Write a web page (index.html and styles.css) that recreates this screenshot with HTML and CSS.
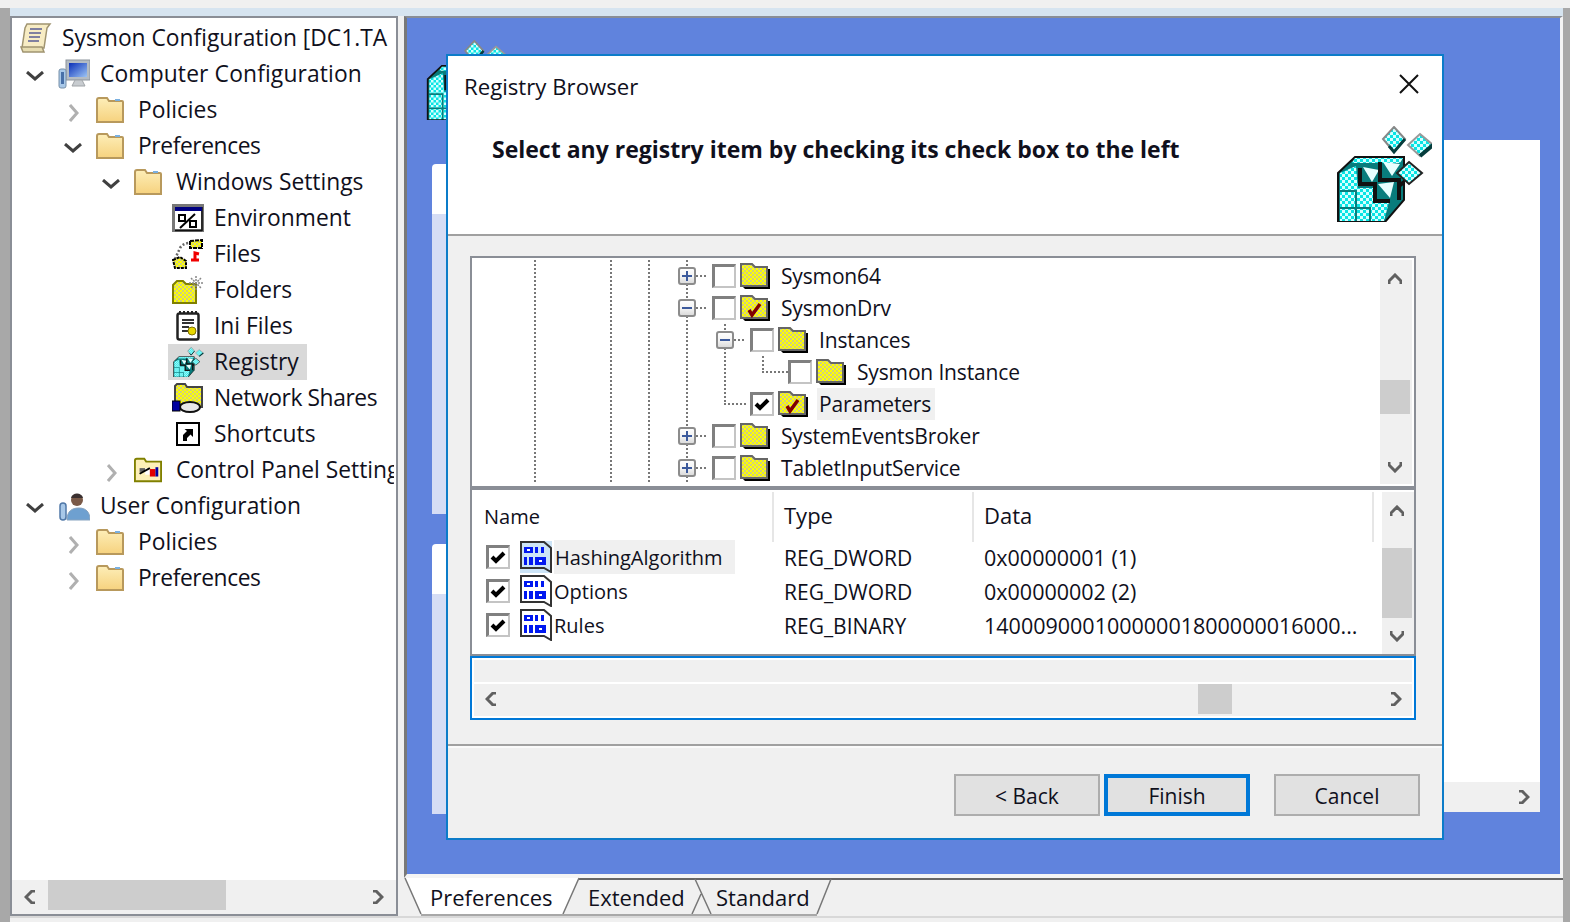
FILE: index.html
```html
<!DOCTYPE html>
<html lang="en">
<head>
  <meta charset="UTF-8">
  <title>Registry Browser</title>
  <link rel="stylesheet" href="styles.css">
</head>
<body>
  <svg class="defs" width="0" height="0">
    <defs>
      <pattern id="dy" width="4" height="4" patternUnits="userSpaceOnUse">
        <rect width="4" height="4" fill="#ffff00"/>
        <rect width="2" height="2" fill="#cfcf80"/>
        <rect x="2" y="2" width="2" height="2" fill="#cfcf80"/>
      </pattern>
      <pattern id="dc" width="6" height="6" patternUnits="userSpaceOnUse">
        <rect width="6" height="6" fill="#08e4e4"/>
        <rect width="3" height="3" fill="#d4ffff"/>
        <rect x="3" y="3" width="3" height="3" fill="#d4ffff"/>
      </pattern>
      <linearGradient id="fold" x1="0" y1="0" x2="0" y2="1">
        <stop offset="0" stop-color="#fdeeb8"/>
        <stop offset="1" stop-color="#f6d27e"/>
      </linearGradient>
      <linearGradient id="screen" x1="0" y1="0" x2="1" y2="1">
        <stop offset="0" stop-color="#0a2fb8"/>
        <stop offset="1" stop-color="#9cc4f4"/>
      </linearGradient>
      <linearGradient id="btn" x1="0" y1="0" x2="0" y2="1">
        <stop offset="0" stop-color="#ffffff"/>
        <stop offset="0.55" stop-color="#f2f2f2"/>
        <stop offset="1" stop-color="#d8d8d8"/>
      </linearGradient>

      <symbol id="i-scroll" viewBox="0 0 32 32">
        <path d="M7 2H30L27 6 24 26H2L5 6Z" fill="#f7ecc4" stroke="#a09470" stroke-width="1.5"/>
        <path d="M1 25H22L24 30H3Z" fill="#e6dcb0" stroke="#a09470" stroke-width="1.5"/>
        <path d="M10 7H22M9 11H21M9 15H20M8 19H19" stroke="#8080a0" stroke-width="2"/>
      </symbol>
      <symbol id="i-pc" viewBox="0 0 32 30">
        <rect x="8" y="1" width="24" height="20" fill="#b4bcc4" stroke="#8c949c"/>
        <rect x="11" y="4" width="18" height="14" fill="url(#screen)"/>
        <path d="M17 21H24L27 27H14Z" fill="#c8ccd0" stroke="#a0a4a8"/>
        <rect x="1" y="10" width="7" height="19" rx="2" fill="#a8c8e8" stroke="#7890a8"/>
        <rect x="3" y="13" width="3" height="12" fill="#4870a8"/>
      </symbol>
      <symbol id="i-user" viewBox="0 0 32 30">
        <path d="M9 29C9 20 14 17 21 17S32 21 32 29Z" fill="#6ea0d0" stroke="#88a4c0"/>
        <circle cx="19" cy="9" r="6" fill="#7a5a48"/>
        <path d="M13 7C14 1 24 1 25 7Z" fill="#3a3030"/>
        <rect x="2" y="12" width="6" height="17" rx="3" fill="#a8c8e8" stroke="#5078a8" stroke-width="1.5"/>
      </symbol>
      <symbol id="i-folder" viewBox="0 0 28 26">
        <path d="M1 25V3Q1 1 3 1H11L13 4H26Q27 4 27 5V25Z" fill="url(#fold)" stroke="#b8995c" stroke-width="2"/>
        <rect x="19" y="2" width="5" height="2" fill="#7ab0e0"/>
      </symbol>
      <symbol id="i-env" viewBox="0 0 32 28">
        <rect x="1.5" y="1.5" width="29" height="25" fill="#fff" stroke="#777" stroke-width="3"/>
        <path d="M30 27V3" stroke="#111" stroke-width="1.5"/>
        <path d="M30 26.5H3" stroke="#111" stroke-width="1.5"/>
        <rect x="3" y="3" width="27" height="4" fill="#000080"/>
        <path d="M8 24L23 10" stroke="#000" stroke-width="2"/>
        <rect x="7" y="11" width="6" height="6" fill="none" stroke="#000" stroke-width="2"/>
        <rect x="18" y="17" width="6" height="6" fill="none" stroke="#000" stroke-width="2"/>
      </symbol>
      <symbol id="i-files" viewBox="0 0 32 30">
        <path d="M18 2L30 1V9H18Z" fill="url(#dy)" stroke="#000" stroke-width="2" stroke-dasharray="4 1"/>
        <path d="M3 20L8 9Q11 4 18 4" fill="none" stroke="#666" stroke-width="2.5" stroke-dasharray="2 2"/>
        <path d="M1 21L8 18 14 22V29H3Z" fill="url(#dy)" stroke="#000" stroke-width="2" stroke-dasharray="3 1"/>
        <path d="M19 21H27M23 22V14L27 15" stroke="#f00000" stroke-width="3" fill="none"/>
      </symbol>
      <symbol id="i-folders" viewBox="0 0 32 28">
        <path d="M1 27V9L5 5H11L14 8H24V27Z" fill="url(#dy)" stroke="#808000" stroke-width="2"/>
        <path d="M24 0V14M17 7H31M19 2L29 12M29 2L19 12" stroke="#888" stroke-width="1.5" stroke-dasharray="2 1"/>
      </symbol>
      <symbol id="i-ini" viewBox="0 0 32 30">
        <rect x="5.5" y="2.5" width="21" height="26" rx="2" fill="#fff" stroke="#222" stroke-width="2.5"/>
        <path d="M7 1H25" stroke="#222" stroke-width="2.5" stroke-dasharray="2 2"/>
        <path d="M10 9H22M10 12H22M10 16H17M10 20H16" stroke="#333" stroke-width="2"/>
        <circle cx="20" cy="20" r="4" fill="#e8d800" stroke="#807000"/>
      </symbol>
      <symbol id="i-reg" viewBox="0 0 96 96">
        <polygon points="58,1 69,13 58,26 47,13" fill="url(#dc)" stroke="#888" stroke-width="2"/>
        <path d="M69 13L58 26 53 20" fill="none" stroke="#063c3c" stroke-width="3"/>
        <polygon points="84,8 97,19 84,30 72,19" fill="url(#dc)" stroke="#999" stroke-width="2"/>
        <path d="M97 19L84 30" fill="none" stroke="#063c3c" stroke-width="4"/>
        <polygon points="2,47 19,31 68,31 68,74 49,96 2,96" fill="#087c7c" stroke="#111" stroke-width="2"/>
        <polygon points="19,32 67,32 64,37 16,37" fill="url(#dc)"/>
        <polygon points="4,47 20,40 22,64 4,64" fill="url(#dc)"/>
        <rect x="4" y="66" width="15" height="15" fill="url(#dc)"/>
        <rect x="21" y="62" width="17" height="19" fill="url(#dc)"/>
        <rect x="4" y="83" width="15" height="12" fill="url(#dc)"/>
        <rect x="21" y="83" width="12" height="12" fill="url(#dc)"/>
        <polygon points="35,76 53,76 48,95 35,95" fill="url(#dc)"/>
        <polygon points="27,41 43,44 36,56" fill="#e8ffff"/>
        <polygon points="47,36 64,38 56,50" fill="#e8ffff"/>
        <polygon points="42,58 58,56 54,72" fill="#e8ffff"/>
        <path d="M24 42V58H41M39 58V75H54M44 36V54H63V74M63 60L68 56" fill="none" stroke="#111" stroke-width="4"/>
        <polygon points="73,36 86,47 73,58 61,47" fill="url(#dc)" stroke="#222" stroke-width="2"/>
      </symbol>
      <symbol id="i-net" viewBox="0 0 32 30">
        <path d="M3 20V3L5 1H13L15 4H30V24H3Z" fill="url(#dy)" stroke="#444" stroke-width="2"/>
        <ellipse cx="18" cy="24" rx="10" ry="5" fill="#e8e8e8" stroke="#111" stroke-width="2"/>
        <rect x="0" y="18" width="8" height="10" fill="#0000a0" stroke="#000"/>
      </symbol>
      <symbol id="i-short" viewBox="0 0 24 24">
        <rect x="1" y="1" width="22" height="22" fill="#fff" stroke="#000" stroke-width="2"/>
        <path d="M7 19V13L11 9 8.5 7H17V15L14.5 12.5 11 16V19Z" fill="#000"/>
      </symbol>
      <symbol id="i-cpl" viewBox="0 0 30 26">
        <path d="M1 25V3Q1 1 3 1H11L13 4H29V25Z" fill="#fdf0b8" stroke="#808000" stroke-width="2"/>
        <rect x="6" y="11" width="6" height="4" fill="#606060"/>
        <rect x="12" y="11" width="5" height="7" fill="#fff"/>
        <path d="M6 17L17 11" stroke="#000" stroke-width="2"/>
        <rect x="17" y="12" width="6" height="8" fill="#e00000"/>
        <rect x="23" y="10" width="3" height="10" fill="#0000a0"/>
      </symbol>
      <symbol id="i-yfold" viewBox="0 0 30 28">
        <path d="M5 27H30V7H2V24Z" fill="#000"/>
        <path d="M1 24V2H12L15 5H27V24Z" fill="url(#dy)" stroke="#666" stroke-width="2"/>
      </symbol>
      <symbol id="i-yfoldc" viewBox="0 0 30 28">
        <path d="M5 27H30V7H2V24Z" fill="#000"/>
        <path d="M1 24V2H12L15 5H27V24Z" fill="url(#dy)" stroke="#666" stroke-width="2"/>
        <path d="M9 16L12 21 20 10" fill="none" stroke="#800000" stroke-width="3.5"/>
      </symbol>
      <symbol id="i-bin" viewBox="0 0 32 32">
        <path d="M1 1H24L31 7V31L24 27H1Z" fill="none" stroke="#333" stroke-width="2"/>
        <path d="M4 6H13V12H4ZM15 6H18V12H15ZM21 6H24V12H21ZM4 16H7V24H4ZM9 16H13V24H9ZM15 16H26V24H15Z" fill="#0018f0"/>
        <rect x="7" y="8" width="3" height="2" fill="#fff"/>
        <rect x="19" y="19" width="3" height="2" fill="#fff"/>
      </symbol>
      <symbol id="i-plus" viewBox="0 0 18 18">
        <rect x="1" y="1" width="16" height="16" rx="2" fill="url(#btn)" stroke="#8c8c8c" stroke-width="2"/>
        <path d="M4 9H14M9 4V14" stroke="#3c5a9c" stroke-width="2"/>
      </symbol>
      <symbol id="i-minus" viewBox="0 0 18 18">
        <rect x="1" y="1" width="16" height="16" rx="2" fill="url(#btn)" stroke="#8c8c8c" stroke-width="2"/>
        <path d="M4 9H14" stroke="#3c5a9c" stroke-width="2"/>
      </symbol>
      <symbol id="i-tick" viewBox="0 0 24 24">
        <path d="M6 12L10 16 18 8" fill="none" stroke="#000" stroke-width="4"/>
      </symbol>
      <symbol id="ch-up" viewBox="0 0 14 12"><path d="M1 11V8L7 2 13 8V11" fill="none" stroke="#606060" stroke-width="3"/></symbol>
      <symbol id="ch-down" viewBox="0 0 14 12"><path d="M1 1V4L7 10 13 4V1" fill="none" stroke="#606060" stroke-width="3"/></symbol>
      <symbol id="ch-left" viewBox="0 0 12 14"><path d="M11 1H8L2 7 8 13H11" fill="none" stroke="#606060" stroke-width="3"/></symbol>
      <symbol id="ch-right" viewBox="0 0 12 14"><path d="M1 1H4L10 7 4 13H1" fill="none" stroke="#606060" stroke-width="3"/></symbol>
      <symbol id="tw-open" viewBox="0 0 18 10"><path d="M1 1L9 8 17 1" fill="none" stroke="#404040" stroke-width="3"/></symbol>
      <symbol id="tw-closed" viewBox="0 0 10 18"><path d="M1 1L8 9 1 17" fill="none" stroke="#b0b0b0" stroke-width="3"/></symbol>
    </defs>
  </svg>

  <div class="frame">
    <div class="strip"></div>
    <div class="panes">

      <div class="left">
        <div class="nav">
          <div class="node lv0"><svg class="ic ic-scroll"><use href="#i-scroll"/></svg><span>Sysmon Configuration [DC1.TA</span></div>
          <div class="node lv1"><i class="tw"><svg class="tw-o"><use href="#tw-open"/></svg></i><svg class="ic ic-pc"><use href="#i-pc"/></svg><span class="wid">Computer Configuration</span></div>
          <div class="node lv2"><i class="tw"><svg class="tw-c"><use href="#tw-closed"/></svg></i><svg class="ic ic-fold"><use href="#i-folder"/></svg><span>Policies</span></div>
          <div class="node lv2"><i class="tw"><svg class="tw-o"><use href="#tw-open"/></svg></i><svg class="ic ic-fold"><use href="#i-folder"/></svg><span class="nar">Preferences</span></div>
          <div class="node lv3"><i class="tw"><svg class="tw-o"><use href="#tw-open"/></svg></i><svg class="ic ic-fold"><use href="#i-folder"/></svg><span>Windows Settings</span></div>
          <div class="node lv4"><i class="tw"></i><svg class="ic ic-item"><use href="#i-env"/></svg><span>Environment</span></div>
          <div class="node lv4"><i class="tw"></i><svg class="ic ic-item"><use href="#i-files"/></svg><span>Files</span></div>
          <div class="node lv4"><i class="tw"></i><svg class="ic ic-item"><use href="#i-folders"/></svg><span>Folders</span></div>
          <div class="node lv4"><i class="tw"></i><svg class="ic ic-item"><use href="#i-ini"/></svg><span>Ini Files</span></div>
          <div class="node lv4"><i class="tw"></i><div class="sel"><svg class="ic ic-item"><use href="#i-reg"/></svg><span>Registry</span></div></div>
          <div class="node lv4"><i class="tw"></i><svg class="ic ic-item"><use href="#i-net"/></svg><span class="nar">Network Shares</span></div>
          <div class="node lv4"><i class="tw"></i><svg class="ic ic-short"><use href="#i-short"/></svg><span>Shortcuts</span></div>
          <div class="node lv3"><i class="tw"><svg class="tw-c"><use href="#tw-closed"/></svg></i><svg class="ic ic-fold"><use href="#i-cpl"/></svg><span>Control Panel Settings</span></div>
          <div class="node lv1"><i class="tw"><svg class="tw-o"><use href="#tw-open"/></svg></i><svg class="ic ic-pc"><use href="#i-user"/></svg><span>User Configuration</span></div>
          <div class="node lv2"><i class="tw"><svg class="tw-c"><use href="#tw-closed"/></svg></i><svg class="ic ic-fold"><use href="#i-folder"/></svg><span>Policies</span></div>
          <div class="node lv2"><i class="tw"><svg class="tw-c"><use href="#tw-closed"/></svg></i><svg class="ic ic-fold"><use href="#i-folder"/></svg><span class="nar">Preferences</span></div>
        </div>
        <div class="hbar">
          <svg class="chev-h"><use href="#ch-left"/></svg>
          <div class="hthumb"></div>
          <svg class="chev-h end"><use href="#ch-right"/></svg>
        </div>
      </div>

      <div class="right">
        <div class="mdi">
          <svg class="bg-reg"><use href="#i-reg"/></svg>
          <div class="sheet sheet-a"></div>
          <div class="sheet sheet-b"></div>
          <div class="sheet-r">
            <div class="sheet-r-bar"><svg class="chev-h"><use href="#ch-right"/></svg></div>
          </div>

          <div class="dialog">
            <div class="head">
              <div class="head-text">
                <div class="dlg-title">Registry Browser</div>
                <div class="dlg-sub">Select any registry item by checking its check box to the left</div>
              </div>
              <svg class="head-ico"><use href="#i-reg"/></svg>
              <svg class="close" viewBox="0 0 20 20"><path d="M1 1L19 19M19 1L1 19" stroke="#111" stroke-width="2"/></svg>
            </div>

            <div class="body">
              <div class="keys">
                <div class="guide g1"></div>
                <div class="guide g2"></div>
                <div class="guide g3"></div>
                <div class="guide g4"></div>
                <div class="guide g5"></div>
                <div class="guide g6"></div>
                <div class="guide-h h1"></div>
                <div class="guide-h h2"></div>
                <div class="key-rows">
                  <div class="key k0"><div class="exp"><svg><use href="#i-plus"/></svg></div><div class="cb"></div><svg class="yf"><use href="#i-yfold"/></svg><span>Sysmon64</span></div>
                  <div class="key k0"><div class="exp"><svg><use href="#i-minus"/></svg></div><div class="cb"></div><svg class="yf"><use href="#i-yfoldc"/></svg><span>SysmonDrv</span></div>
                  <div class="key k1"><div class="exp"><svg><use href="#i-minus"/></svg></div><div class="cb"></div><svg class="yf"><use href="#i-yfold"/></svg><span>Instances</span></div>
                  <div class="key k2"><div class="exp none"></div><div class="cb"></div><svg class="yf"><use href="#i-yfold"/></svg><span>Sysmon Instance</span></div>
                  <div class="key k1"><div class="exp none"></div><div class="cb"><svg><use href="#i-tick"/></svg></div><svg class="yf"><use href="#i-yfoldc"/></svg><span class="hl">Parameters</span></div>
                  <div class="key k0"><div class="exp"><svg><use href="#i-plus"/></svg></div><div class="cb"></div><svg class="yf"><use href="#i-yfold"/></svg><span>SystemEventsBroker</span></div>
                  <div class="key k0"><div class="exp"><svg><use href="#i-plus"/></svg></div><div class="cb"></div><svg class="yf"><use href="#i-yfold"/></svg><span>TabletInputService</span></div>
                </div>
                <div class="vbar">
                  <svg class="chev-v"><use href="#ch-up"/></svg>
                  <div class="vthumb thumb-keys"></div>
                  <svg class="chev-v"><use href="#ch-down"/></svg>
                </div>
              </div>

              <div class="values">
                <div class="val-table">
                  <div class="val-head">
                    <div class="col-name">Name</div>
                    <div>Type</div>
                    <div>Data</div>
                  </div>
                  <div class="val-row">
                    <div class="val-name"><div class="cb"><svg><use href="#i-tick"/></svg></div><svg class="bin on"><use href="#i-bin"/></svg><span class="hl">HashingAlgorithm</span></div>
                    <div class="val-type">REG_DWORD</div>
                    <div class="val-data">0x00000001 (1)</div>
                  </div>
                  <div class="val-row">
                    <div class="val-name"><div class="cb"><svg><use href="#i-tick"/></svg></div><svg class="bin"><use href="#i-bin"/></svg><span>Options</span></div>
                    <div class="val-type">REG_DWORD</div>
                    <div class="val-data">0x00000002 (2)</div>
                  </div>
                  <div class="val-row">
                    <div class="val-name"><div class="cb"><svg><use href="#i-tick"/></svg></div><svg class="bin"><use href="#i-bin"/></svg><span>Rules</span></div>
                    <div class="val-type">REG_BINARY</div>
                    <div class="val-data">14000900010000001800000016000...</div>
                  </div>
                </div>
                <div class="vbar">
                  <svg class="chev-v"><use href="#ch-up"/></svg>
                  <div class="vthumb thumb-vals"></div>
                  <svg class="chev-v"><use href="#ch-down"/></svg>
                </div>
              </div>

              <div class="detail">
                <div class="detail-top"></div>
                <div class="detail-bar">
                  <svg class="chev-h"><use href="#ch-left"/></svg>
                  <div class="detail-thumb"></div>
                  <svg class="chev-h end"><use href="#ch-right"/></svg>
                </div>
              </div>

              <div class="rule"></div>
            </div>

            <div class="foot">
              <button class="btn back" type="button">&lt; Back</button>
              <button class="btn primary" type="button">Finish</button>
              <button class="btn cancel" type="button">Cancel</button>
            </div>
          </div>
        </div>

        <div class="tabs">
          <svg class="tab-lines" viewBox="0 0 1159 38">
            <path d="M175 1H1159" stroke="#666" stroke-width="2"/>
            <path d="M1 0H175L159 36H17Z" fill="#fff"/>
            <path d="M1 0L17 36M175 0L159 36" stroke="#777" stroke-width="1.5" fill="none"/>
            <path d="M291 1L307 36M427 1L413 36M288 36L297 16" stroke="#777" stroke-width="1.5" fill="none"/>
            <path d="M17 37H413" stroke="#a8a8a8" stroke-width="2"/>
          </svg>
          <div class="tab t1">Preferences</div>
          <div class="tab t2">Extended</div>
          <div class="tab">Standard</div>
        </div>
      </div>
    </div>
    <div class="status"></div>
  </div>
</body>
</html>
```

FILE: styles.css
```css
* { box-sizing: border-box; }

html, body {
  margin: 0;
  height: 100%;
  overflow: hidden;
}
body {
  background: #f0f0f0;
  font-family: "Open Sans", "Noto Sans", sans-serif;
  font-size: 22px;
  color: #10101c;
}
.defs { position: absolute; }
svg { display: block; overflow: visible; }

/* outer window */
.frame {
  width: 1570px;
  height: 914px;
  margin-top: 8px;
  border-left: 10px solid #a8a8a8;
  border-right: 7px solid #a8a8a8;
}
.strip { height: 8px; background: #d6e4f0; }
.panes { display: flex; gap: 6px; height: 900px; }
.status { height: 6px; border-top: 2px solid #d8d8d8; }

/* left tree */
.left {
  width: 388px;
  display: flex;
  flex-direction: column;
  border: 2px solid #8a8e96;
  background: #fff;
}
.nav { flex: 1; padding-top: 2px; overflow: hidden; margin-right: 2px; font-size: 22.8px; }
.node { display: flex; align-items: center; height: 36px; white-space: nowrap; }
.node span { height: 36px; line-height: 36px; }
.nar { letter-spacing: -0.4px; }
.wid { letter-spacing: 0.15px; }
.lv0 { padding-left: 8px; }
.lv1 { padding-left: 8px; }
.lv2 { padding-left: 46px; }
.lv3 { padding-left: 84px; }
.lv4 { padding-left: 122px; }
.tw { width: 38px; flex: none; display: flex; align-items: center; justify-content: center; padding-right: 8px; }
.tw-o { width: 18px; height: 10px; margin-top: 4px; }
.tw-c { width: 10px; height: 18px; margin: 6px 0 0 2px; }
.ic { flex: none; }
.ic-scroll { width: 32px; height: 32px; margin-right: 10px; }
.ic-pc { width: 32px; height: 30px; margin-right: 10px; }
.ic-fold { width: 28px; height: 26px; margin-right: 14px; }
.ic-item { width: 32px; height: 30px; margin-right: 10px; }
.ic-short { width: 24px; height: 24px; margin: 0 14px 0 4px; }
.sel {
  display: flex;
  align-items: center;
  height: 36px;
  margin-left: -4px;
  padding: 0 8px 0 4px;
  background: #d9d9d9;
}
.hbar {
  position: relative;
  display: flex;
  align-items: center;
  height: 34px;
  background: #f0f0f0;
  padding: 0 12px;
}
.hthumb {
  position: absolute;
  left: 36px;
  top: 0;
  width: 178px;
  height: 30px;
  background: #cdcdcd;
}
.chev-h { width: 12px; height: 14px; flex: none; }
.chev-h.end { margin-left: auto; }
.chev-v { width: 14px; height: 12px; flex: none; }

/* right side, blue client area */
.right { width: 1159px; display: flex; flex-direction: column; }
.mdi {
  position: relative;
  height: 862px;
  background: #6083dd;
  border-top: 2px solid #8a8e96;
  border-left: 3px solid #787878;
  border-right: 3px solid #f4f4f4;
  border-bottom: 4px solid #f4f4f4;
}
.bg-reg { position: absolute; left: 19px; top: 22px; width: 80px; height: 80px; }
.sheet {
  position: absolute;
  left: 25px;
  width: 16px;
  border-top-left-radius: 4px;
  background: linear-gradient(#fff 50px, #d5ddf5 50px);
}
.sheet-a { top: 146px; height: 350px; }
.sheet-b { top: 526px; height: 270px; }
.sheet-r {
  position: absolute;
  left: 1033px;
  top: 122px;
  width: 100px;
  height: 672px;
  background: #fff;
  display: flex;
  align-items: flex-end;
}
.sheet-r-bar {
  width: 100%;
  height: 30px;
  background: #f0f0f0;
  display: flex;
  align-items: center;
  justify-content: flex-end;
  padding-right: 10px;
}

/* dialog */
.dialog {
  position: absolute;
  left: 39px;
  top: 36px;
  width: 998px;
  height: 786px;
  background: #f0f0f0;
  border: 2px solid #0c7cc9;
  display: flex;
  flex-direction: column;
}
.head {
  position: relative;
  display: flex;
  height: 180px;
  background: #fff;
  border-bottom: 2px solid #a0a0a0;
}
.head-text { flex: 1; padding: 14px 0 0 16px; }
.dlg-title { height: 32px; line-height: 34px; font-size: 22.2px; }
.dlg-sub { margin: 31px 0 0 28px; line-height: 32px; font-weight: 700; font-size: 23px; }
.head-ico { width: 96px; height: 96px; margin: 70px 10px 0 0; flex: none; }
.close { position: absolute; right: 23px; top: 18px; width: 20px; height: 20px; }

.body { padding: 20px 26px 0 22px; }
.keys {
  position: relative;
  display: flex;
  height: 232px;
  background: #fff;
  border: 2px solid #8a8e96;
}
.guide {
  position: absolute;
  width: 2px;
  background: repeating-linear-gradient(to bottom, #777 0 2px, transparent 2px 4px);
}
.guide-h {
  position: absolute;
  height: 2px;
  background: repeating-linear-gradient(to right, #777 0 2px, transparent 2px 4px);
}
.g1, .g2, .g3, .g4 { top: 2px; height: 222px; }
.g1 { left: 62px; }
.g2 { left: 138px; }
.g3 { left: 176px; }
.g4 { left: 214px; }
.g5 { left: 252px; top: 66px; height: 80px; }
.g6 { left: 290px; top: 98px; height: 16px; }
.h1 { left: 252px; top: 145px; width: 22px; }
.h2 { left: 290px; top: 113px; width: 26px; }

.key-rows { position: relative; flex: 1; padding-top: 2px; font-size: 21px; letter-spacing: -0.15px; }
.key { display: flex; align-items: center; height: 32px; white-space: nowrap; }
.key span { height: 32px; line-height: 32px; }
.k0 { padding-left: 206px; }
.k1 { padding-left: 244px; }
.k2 { padding-left: 282px; }
.exp { position: relative; width: 18px; height: 18px; margin-right: 16px; }
.exp svg { width: 18px; height: 18px; }
.exp::after {
  content: "";
  position: absolute;
  left: 18px;
  top: 8px;
  width: 12px;
  height: 2px;
  background: repeating-linear-gradient(to right, #777 0 2px, transparent 2px 4px);
}
.exp.none { visibility: hidden; }
.cb {
  width: 24px;
  height: 24px;
  flex: none;
  background: #fff;
  border: 2px solid;
  border-color: #808080 #c4c4c4 #c4c4c4 #808080;
  border-width: 3px 2px 2px 3px;
}
.cb svg { width: 24px; height: 24px; margin: -3px 0 0 -3px; }
.yf { width: 30px; height: 28px; margin: 0 11px 0 4px; flex: none; }
.hl { background: #f0f0f0; padding: 0 4px 0 2px; margin-left: -2px; }

.vbar {
  width: 32px;
  flex: none;
  margin: 2px 2px 2px 0;
  background: #f0f0f0;
  display: flex;
  flex-direction: column;
  align-items: center;
  position: relative;
  padding: 13px 2px 11px 0;
  justify-content: space-between;
}
.vthumb { position: absolute; left: 0; width: 30px; background: #cdcdcd; }
.thumb-keys { top: 120px; height: 34px; }
.thumb-vals { top: 56px; height: 70px; }

.values {
  display: flex;
  height: 168px;
  background: #fff;
  border: 2px solid #8a8e96;
}
.values .vbar { margin: 2px 0 0 0; padding: 13px 2px 12px 0; }
.val-table { flex: 1; margin-right: 8px; }
.val-head, .val-row { display: grid; grid-template-columns: 302px 200px 400px; }
.val-head { height: 48px; margin-top: 2px; }
.val-head > div {
  padding: 0 0 0 10px;
  line-height: 46px;
  border-right: 2px solid #e6e6e6;
}
.val-head > .col-name { padding-left: 12px; font-size: 20px; line-height: 50px; }
.val-row { height: 34px; line-height: 36px; white-space: nowrap; }
.val-row > div { padding-left: 10px; }
.val-row > .val-name {
  display: flex;
  align-items: center;
  padding: 0 0 2px 14px;
  font-size: 20px;
}
.val-name span { height: 34px; align-self: flex-start; }
.val-type { font-size: 21px; }
.val-data { font-size: 21.5px; }
.bin { width: 32px; height: 32px; margin: 0 2px 0 10px; flex: none; }
.bin.on { background: #cce4f7; }
.val-name .hl { padding: 0 12px 0 1px; margin-left: 0; }

.detail {
  height: 64px;
  background: #fff;
  border: 2px solid #0078d7;
  padding: 2px;
}
.detail-top { height: 22px; background: #f0f0f0; }
.detail-bar {
  position: relative;
  display: flex;
  align-items: center;
  height: 32px;
  margin-top: 2px;
  padding: 0 10px 2px 11px;
  background: #f0f0f0;
}
.detail-thumb {
  position: absolute;
  left: 724px;
  top: 0;
  width: 34px;
  height: 30px;
  background: #cdcdcd;
}
.rule {
  height: 4px;
  margin: 24px -26px 0 -22px;
  border-top: 2px solid #a0a0a0;
  border-bottom: 2px solid #fafafa;
}

.foot { display: flex; padding: 26px 22px 0 0; justify-content: flex-end; }
.btn {
  width: 146px;
  height: 42px;
  padding: 1px 0 0;
  font: inherit;
  font-size: 21px;
  color: inherit;
  background: #e1e1e1;
  border: 2px solid #adadad;
}
.primary { margin: 0 24px 0 4px; border: 4px solid #0078d7; }

/* tabs */
.tabs {
  position: relative;
  display: flex;
  align-items: center;
  height: 38px;
  padding-left: 26px;
}
.tab-lines { position: absolute; left: 0; top: 0; width: 1159px; height: 38px; }
.tab { position: relative; white-space: nowrap; }
.t1 { width: 158px; }
.t2 { width: 128px; }
```
